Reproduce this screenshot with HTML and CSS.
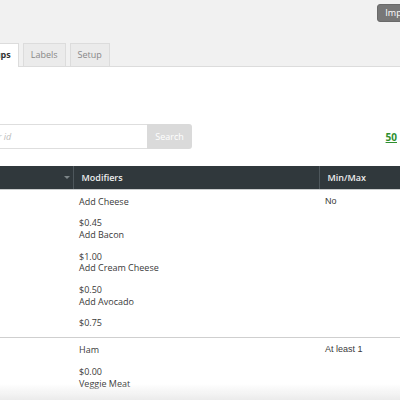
FILE: index.html
```html
<!DOCTYPE html>
<html>
<head>
<meta charset="utf-8">
<link rel="stylesheet" href="styles.css">
</head>
<body>
<div class="page">
  <div class="topbar">
    <div class="actions"><button class="btn-import">Import</button></div>
    <div class="tabs">
      <div class="tab active">Modifier Groups</div>
      <div class="tab">Labels</div>
      <div class="tab">Setup</div>
    </div>
  </div>
  <div class="search-row">
    <div class="search">
      <input class="search-input" type="text" placeholder="Search by name or id">
      <button class="search-btn">Search</button>
    </div>
    <a class="perpage">50</a>
  </div>
  <table class="grid">
    <thead>
      <tr>
        <th class="c-name"><div class="th-inner"><span>Name</span><span class="caret"></span></div></th>
        <th class="c-mod">Modifiers</th>
        <th class="c-min">Min/Max</th>
      </tr>
    </thead>
    <tbody>
      <tr>
        <td>Bagel Toppings</td>
        <td>
          <div class="mod">Add Cheese</div><div class="price">$0.45</div>
          <div class="mod">Add Bacon</div><div class="price">$1.00</div>
          <div class="mod">Add Cream Cheese</div><div class="price">$0.50</div>
          <div class="mod">Add Avocado</div><div class="price">$0.75</div>
        </td>
        <td class="arial">No</td>
      </tr>
      <tr>
        <td>Protein</td>
        <td>
          <div class="mod">Ham</div><div class="price">$0.00</div>
          <div class="mod">Veggie Meat</div><div class="price">$0.00</div>
          <div class="mod">Turkey</div><div class="price">$0.00</div>
        </td>
        <td class="arial">At least 1</td>
      </tr>
    </tbody>
  </table>
</div>
<div class="fade"></div>
</body>
</html>
```

FILE: styles.css
```css
* { box-sizing: border-box; }
html, body { margin: 0; padding: 0; overflow: hidden; background: #fff; }
body { font-family: "Open Sans", "Liberation Sans", sans-serif; font-size: 9px; color: #3a3a3a; width: 400px; height: 400px; }

.page { width: 560px; margin-left: -120px; }

.topbar {
  height: 67px;
  background: #f1f1f1;
  border-bottom: 1px solid #dcdcdc;
  display: flex;
  flex-direction: column;
}
.actions { display: flex; justify-content: flex-end; padding: 4px 18px 0 0; }
.btn-import {
  height: 18px; padding: 0 7px; margin: 0;
  background: #777; color: #fff;
  border: 1px solid #6a6a6a; border-radius: 3px;
  font-family: "Open Sans", sans-serif; font-size: 9px; line-height: 16px;
}
.tabs { margin-top: auto; display: flex; align-items: flex-end; gap: 4px; padding-left: 50px; }
.tab {
  height: 23px; padding: 0 7px; line-height: 22px;
  border: 1px solid #dcdcdc; border-bottom: none;
  background: #ebebeb; color: #888;
}
.tab.active {
  height: 24px; margin-bottom: -1px;
  background: #fff; color: #333; font-weight: 700;
  position: relative;
}

.search-row { display: flex; align-items: center; margin-top: 57px; padding: 0 43px 0 38px; }
.search { display: flex; }
.search-input {
  width: 229px; height: 25px; margin: 0; padding: 0 8px;
  border: 1px solid #dedede; border-right: none; border-radius: 3px 0 0 3px;
  font-family: "Open Sans", sans-serif; font-size: 9px; outline: none;
}
.search-input::placeholder { color: #bbb; font-style: italic; }
.search-btn {
  width: 45px; height: 25px; margin: 0; padding: 0;
  background: #dadada; color: #fff; border: none; border-radius: 0 3px 3px 0;
  font-family: "Open Sans", sans-serif; font-size: 9px;
}
.perpage { margin-left: auto; color: #2f8f2f; font-weight: 700; font-size: 10px; text-decoration: underline; }

.grid { margin-top: 17px; width: 560px; border-collapse: collapse; table-layout: fixed; }
.grid th {
  height: 23px; padding: 0 8px; text-align: left;
  background: #30383c; color: #eee; font-weight: 600; font-size: 9px;
  border-left: 1px solid #4e575c;
  border-bottom: 1px solid #c9cccd;
}
.grid th:first-child { border-left: none; }
.c-name { width: 193px; }
.c-mod { width: 246px; }
.th-inner { display: flex; justify-content: space-between; align-items: center; margin-right: -5px; }
.caret { width: 0; height: 0; border-left: 3px solid transparent; border-right: 3px solid transparent; border-top: 3px solid #7d8588; }
.grid td {
  vertical-align: top; padding: 6px 6px 8px;
  line-height: 11.7px; border-bottom: 1px solid #cfcfcf;
}
.price { margin-top: 10px; }
.arial { font-family: "Liberation Sans", Arial, sans-serif; }

.fade {
  position: fixed; left: 0; right: 0; bottom: 0; height: 16px;
  background: linear-gradient(to bottom, rgba(236,236,236,0), #ebebeb);
}
```
